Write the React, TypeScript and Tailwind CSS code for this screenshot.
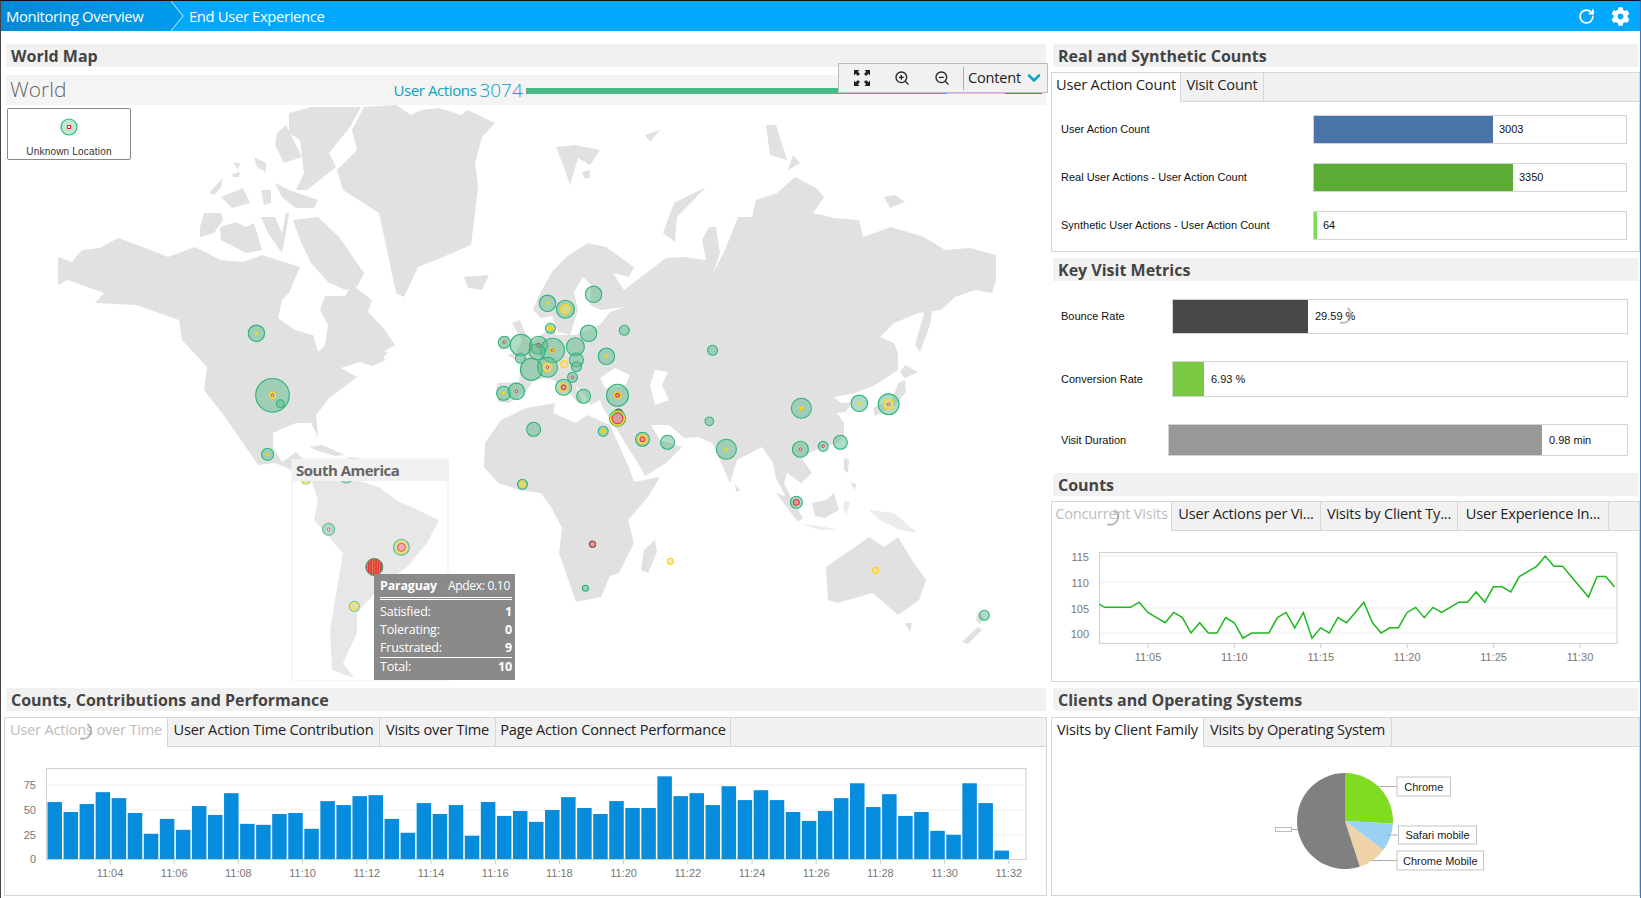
import React from 'react'
import { ChevronDown, RotateCw, ZoomIn, ZoomOut } from 'lucide-react'
import { FaCog } from 'react-icons/fa'

type Tab = { label: string; width: string; faded?: boolean }

const Header = ({ title }: { title: string }) => (
  <div className="h-[23px] bg-[#f1f1f1] pl-[5px] flex items-center text-[16px] font-bold text-[#444]">
    {title}
  </div>
)

const Tabs = ({ tabs }: { tabs: Tab[] }) => (
  <div className="h-[29px] bg-[#f1f1f1] border-b border-[#d6d6d6] flex text-[14.6px] tracking-[-0.2px] text-[#222]">
    {tabs.map((t, i) => (
      <div
        key={t.label}
        className={`${t.width} h-[29px] pb-[5px] border-r border-[#d6d6d6] flex items-center justify-center whitespace-nowrap ${i === 0 ? 'bg-white' : ''} ${t.faded ? 'text-[#bdbdbd]' : ''}`}
      >
        {t.label}
      </div>
    ))}
  </div>
)

const Spinner = ({ className }: { className: string }) => (
  <svg viewBox="0 0 20 20" className={`absolute w-[20px] h-[20px] ${className}`}>
    <path d="M12 2.5A8 8 0 0 1 5 16.5" fill="none" stroke="#999" strokeWidth="2" strokeOpacity="0.7" strokeLinecap="round" />
  </svg>
)

const CountBar = ({ label, value, fill }: { label: string; value: string; fill: string }) => (
  <div className="flex items-center h-[29px] mb-[19px]">
    <div className="w-[261px] pl-[9px] text-[#111]">{label}</div>
    <div className="w-[314px] h-[29px] border-[1.5px] border-[#d4d4d4] flex items-center">
      <div className={`${fill} h-full`} />
      <span className="ml-[6px] text-[#111]">{value}</span>
    </div>
  </div>
)

// land outlines, in page pixels
const land: [string, string?][] = [
  // north america
  ['58,257 72,262 82,250 100,248 118,238 140,246 168,257 195,247 221,260 243,262 262,255 300,267 289,293 282,300 278,318 295,330 313,335 318,352 325,345 328,325 320,310 325,296 345,296 352,285 372,300 368,312 385,330 395,345 378,355 386,360 372,366 360,362 341,368 357,377 340,390 330,397 316,415 318,437 311,423 296,423 273,433 273,447 282,462 296,452 302,460 320,478 312,480 296,472 275,463 258,465 243,443 225,417 204,390 207,367 182,340 179,320 136,305 95,303 104,293 68,280 58,285'],
  // greenland and arctic islands
  ['364,107 396,105 411,115 421,110 439,108 461,115 468,110 495,123 482,137 475,163 478,185 475,213 471,245 443,257 418,267 404,297 396,293 387,250 379,213 343,190 337,170 357,150 352,130'],
  ['289,113 311,107 361,107 350,127 329,153 336,167 307,190 296,190 304,173 300,140 289,133'],
  ['277,133 286,125 302,157 284,163 275,145'],
  ['204,213 221,213 223,220 214,233 200,237 200,227'],
  ['220,227 236,222 246,227 254,223 262,250 246,253 221,240'],
  ['221,197 243,188 250,203 232,208'],
  ['209,193 223,178 221,187 214,195'],
  ['254,157 266,163 266,172 257,167'],
  ['233,162 240,163 238,170'],
  ['232,174 240,172 239,177 233,177'],
  ['261,190 271,190 271,203 264,205'],
  ['275,183 289,190 318,200 314,208 296,208 282,197'],
  ['261,217 275,217 282,233 286,213 289,213 286,233 282,253 268,233'],
  ['293,220 318,217 339,237 364,273 357,287 346,290 329,283 311,263 300,240'],
  ['464,277 489,275 482,290 468,288'],
  ['375,350 388,352 380,362 372,358'],
  ['310,447 322,445 345,455 335,456 315,450'],
  ['348,457 360,458 358,462 348,461'],
  // south america
  ['296,452 321,478 346,477 379,487 396,500 439,520 427,543 407,567 380,587 357,613 357,633 343,663 354,678 332,670 330,630 343,553 314,520 318,500 312,482'],
  // eurasia
  ['496,388 498,383 519,382 521,363 507,355 519,352 534,340 548,330 550,322 556,335 575,335 600,325 610,312 625,307 601,310 590,305 591,285 583,277 574,292 578,310 570,335 558,332 552,316 541,318 533,310 538,297 552,272 566,257 588,243 606,247 634,267 629,277 613,273 624,290 641,277 666,258 684,257 706,260 702,240 709,227 716,227 720,253 713,273 725,250 738,217 752,217 756,200 777,193 795,177 816,188 824,197 813,213 834,218 859,220 863,237 891,227 924,237 945,250 970,248 996,255 996,280 992,293 975,290 955,297 941,310 919,313 894,323 880,337 894,343 898,353 898,370 875,385 855,393 834,397 841,403 852,402 846,412 837,413 844,423 844,437 837,443 816,450 801,457 812,473 801,483 787,473 784,483 791,497 801,515 790,505 776,478 773,463 762,447 737,460 730,483 723,467 712,443 698,437 684,438 669,425 651,425 660,440 682,447 666,463 645,476 642,470 616,428 603,408 600,400 591,405 585,395 575,385 584,403 577,402 563,385 548,378 534,380 525,393 509,403 498,402'],
  ['512,323 520,320 530,345 535,352 516,352 522,340'],
  ['500,338 509,336 508,348 500,350'],
  // africa
  ['501,420 526,408 555,403 553,413 576,423 587,415 610,425 630,470 634,482 660,477 648,497 628,520 634,543 619,573 610,576 601,597 576,602 559,553 562,528 551,507 541,493 519,490 498,483 484,467 485,443'],
  ['655,540 657,552 648,573 641,570 644,550'],
  // australasia
  ['826,567 855,547 869,537 884,547 898,537 912,560 926,580 919,600 898,615 873,593 837,603 828,600'],
  ['905,623 912,623 910,632'],
  ['962,642 978,627 982,630 968,644'],
  ['978,612 984,618 980,624 976,620'],
  ['812,503 826,500 834,493 839,510 825,518 815,516'],
  ['776,493 790,498 803,518 798,522'],
  // arctic russia and svalbard
  ['706,187 674,203 663,233 675,242 677,217'],
  ['556,147 575,145 600,150 590,165 578,158 570,185 565,170'],
  ['582,172 590,170 590,178 584,178'],
  ['645,135 660,130 650,142'],
  ['766,125 776,125 787,160 770,155'],
  ['793,155 800,163 788,170'],
  ['884,197 895,195 905,202 890,208'],
  // japan and around
  ['905,380 906,392 895,405 875,416 873,408 893,398 898,383'],
  ['905,365 918,372 905,378 900,372'],
  ['925,310 933,305 930,325 920,352 915,345'],
  ['735,484 740,490 736,492'],
  ['844,458 849,460 848,473 844,470'],
  ['850,482 856,484 855,490'],
  // lighter islands
  ['801,524 820,526 838,530 820,530', '#ececec'],
  ['845,500 850,503 846,515 843,508', '#ececec'],
  ['869,510 894,513 917,533 900,530 880,520', '#ececec'],
]

// [x, y, r, yellow r, red r] as read from the map crops
const bubbles: number[][] = [
  [593.6, 294.3, 8.2, 0, 0], [547.5, 303.3, 8.2, 1.5, 0], [565.4, 309.3, 9, 5, 0], [550.4, 328.3, 5, 2.5, 0],
  [588.6, 333.3, 8.2, 0, 0], [624.3, 330.3, 5, 0, 0], [504.3, 342.3, 6, 0, 1.2], [521, 345, 10.8, 0, 0],
  [538.6, 345.3, 9, 0, 2], [552.5, 350.3, 12, 2.5, 1.2], [537, 351.7, 8, 0, 0], [575.4, 346.7, 9, 0, 0],
  [520.4, 358.3, 5, 0, 0], [606.4, 356.3, 8.2, 1.5, 0], [576.4, 360, 7, 0, 0], [576.4, 366.7, 5, 0, 0],
  [564.3, 364.3, 3.5, 3.5, 0], [531.4, 369.3, 11, 0, 0], [547.5, 367.3, 10, 4.5, 1.2], [572.5, 377.3, 5, 0, 1.2],
  [563.6, 387.3, 8, 4.5, 2.5], [503.6, 393.3, 7, 1.5, 0], [516.4, 391.3, 8.2, 0, 1.2], [583.6, 396.3, 7, 0, 0],
  [617.5, 395.3, 11, 3, 2], [618.5, 413, 4, 0, 4], [617.5, 418.3, 8, 7, 5.5], [603.2, 431.3, 5, 2.2, 0], [533.6, 429.3, 7, 0, 0],
  [642.5, 439.3, 7, 4.5, 2.5], [667.5, 442.3, 7, 0, 0], [712.5, 350.3, 5, 0, 0], [709.3, 421.3, 4.3, 0, 0],
  [726.4, 449.3, 10, 1.5, 0], [801.4, 408.3, 10, 2, 0], [800.4, 449.3, 8, 0, 1.2], [823.2, 446.3, 5, 0, 1.2],
  [840.4, 442.3, 7, 0, 0], [859.3, 403.3, 8.2, 1.5, 0], [888.6, 404.3, 10.4, 5, 1.2], [796.4, 502.3, 6, 0, 3],
  [522.5, 484.3, 5, 3, 0], [592.5, 544.3, 3.2, 0, 3], [670.4, 561.3, 3.2, 3, 0], [585.4, 588.3, 3, 0, 0],
  [875.4, 570.3, 3.2, 3, 0], [984.3, 615.3, 5, 0, 0],
  [256.4, 333.3, 8.2, 1.5, 0], [272.5, 395.3, 16.8, 3, 1.2], [280.4, 403.7, 4, 0, 0], [267.5, 454.3, 6, 1.5, 0],
  [306, 479, 5, 4.5, 0], [346.4, 476, 7, 0, 0], [328.6, 529.3, 6, 0, 1.2], [401.4, 547.3, 8, 6, 4], [354.3, 606.3, 5, 4, 0],
]

const Land = () => (
  <g>
    {land.map(([pts, fill], i) => (
      <polygon key={i} points={pts} fill={fill ?? '#e1e1e1'} />
    ))}
    <polygon points="600,378 615,368 630,375 625,386 605,388" fill="#fff" />
    <polygon points="655,370 668,372 662,385 669,400 655,405 650,385" fill="#fff" />
  </g>
)

const Bubbles = () => (
  <g>
    {bubbles.map(([x, y, r, yr, rr], i) => (
      <g key={i}>
        {r > yr + 0.2 && <circle cx={x} cy={y} r={r} fill="#5fb98b" fillOpacity="0.5" stroke="#2bb57b" strokeWidth="1.1" />}
        {yr > 0 && (
          <circle cx={x} cy={y} r={yr} fill={yr > 2.5 ? '#f8e27a' : '#ffd500'} fillOpacity={yr > 2.5 ? 0.6 : 1} stroke="#ffd21f" strokeWidth={yr > 2.5 ? 1.2 : 0} />
        )}
        {rr > 0 && (
          <circle cx={x} cy={y} r={rr} fill={rr > 1.5 ? '#dd9a9a' : '#fff'} stroke="#e0202c" strokeWidth="1" />
        )}
      </g>
    ))}
  </g>
)

const WorldMap = () => (
  <svg viewBox="1 75 1047 606" className="absolute left-0 top-[44px] w-[1047px] h-[606px]">
    <defs>
      <pattern id="stripes" width="2.4" height="4" patternUnits="userSpaceOnUse">
        <rect width="2.4" height="4" fill="#e23a32" />
        <rect width="0.7" height="4" fill="#f08a70" />
      </pattern>
    </defs>
    <Land />
    <Bubbles />
    <rect x="292" y="459" width="156" height="222" fill="#fff" fillOpacity="0.22" stroke="#eee" />
    <circle cx="374.3" cy="567" r="8.5" fill="url(#stripes)" stroke="#2a9a6c" strokeWidth="1" />
  </svg>
)

const tooltipRows = [
  ['Satisfied:', '1'],
  ['Tolerating:', '0'],
  ['Frustrated:', '9'],
]

const Tooltip = () => (
  <div className="absolute left-[373px] top-[543px] w-[141px] h-[106px] bg-[#8a8a8a] text-white text-[12.5px] tracking-[-0.2px] pl-[6px] pr-[3px] pt-[3px]">
    <div className="flex justify-between items-center h-[18px] pr-[2px] border-b-[3px] border-double border-white box-content pb-[2px]">
      <span className="font-bold">Paraguay</span>
      <span className="text-[12px] tracking-[-0.3px]">Apdex: 0.10</span>
    </div>
    <div className="mt-[3px]">
      {tooltipRows.map(([k, v]) => (
        <div key={k} className="flex justify-between h-[18px] items-center">
          <span>{k}</span>
          <span className="font-bold">{v}</span>
        </div>
      ))}
    </div>
    <div className="flex justify-between h-[19px] items-center border-t border-white">
      <span>Total:</span>
      <span className="font-bold">10</span>
    </div>
  </div>
)

const ExpandIcon = () => (
  <svg viewBox="0 0 16 16" className="w-[16px] h-[16px] text-[#222]" fill="currentColor">
    <path d="M0 0h5.5L3.8 1.7 6 3.9 3.9 6 1.7 3.8 0 5.5zM16 0v5.5l-1.7-1.7L12.1 6 10 3.9l2.2-2.2L10.500 0zM0 16v-5.5l1.700 1.700L3.900 10 6 12.100l-2.200 2.200L5.500 16zM16 16h-5.500l1.700-1.700L10 12.100 12.100 10l2.200 2.200 1.700-1.700z" />
  </svg>
)

const Toolbar = () => (
  <div className="absolute left-[837px] top-[32px] w-[210px] h-[30px] bg-[#f1f1f1] border border-[#bdbdbd] flex items-center text-[#222]">
    <div className="w-[124px] flex items-center pl-[15px] gap-[24px]">
      <ExpandIcon />
      <ZoomIn size={16} strokeWidth={2} />
      <ZoomOut size={16} strokeWidth={2} />
    </div>
    <div className="h-[23px] border-l border-[#aaa] pl-[4px] flex items-center text-[14.6px] tracking-[-0.2px]">
      Content
      <ChevronDown size={20} strokeWidth={3} className="ml-[3px] text-[#0aa5c4]" />
    </div>
  </div>
)

const MapSection = () => (
  <section className="relative -ml-[5px] -mr-[2px] h-[649px]">
    <WorldMap />
    <div className="pt-[13px] pl-[5px] pr-[2px]">
      <div className="relative">
        <Header title="World Map" />
      </div>
      <div className="relative mt-[8px] h-[30px] bg-[#f3f3f3]/90 flex items-center">
        <span className="pl-[4px] text-[21px] font-light text-[#666]">World</span>
        <span className="ml-[327px] text-[15px] tracking-[-0.4px] text-[#109fc0]">User Actions</span>
        <span className="ml-[3px] text-[19px] font-light text-[#109fc0]">3074</span>
        <div className="absolute right-[4px] top-[13px] w-[516px] h-[6px] flex">
          <div className="w-[421px] bg-[#4cba86]" />
          <div className="w-[58px] bg-[#f3d24a]" />
          <div className="w-[37px] bg-[#df4b4b]" />
        </div>
      </div>
    </div>
    <div className="absolute left-[6px] top-[77px] w-[124px] h-[52px] border border-[#8a8a8a] rounded-[2px] bg-white flex flex-col items-center pt-[9px]">
      <svg viewBox="0 0 18 18" className="w-[18px] h-[18px]">
        <circle cx="9" cy="9" r="8" fill="#c3e7d3" stroke="#2bb57b" strokeWidth="1.2" />
        <rect x="7.500" y="7.500" width="3" height="3" fill="#fff" stroke="#e0202c" />
      </svg>
      <div className="mt-[8px] font-['Liberation_Sans',Arial,sans-serif] text-[10px] text-[#333] tracking-[0.2px]">Unknown Location</div>
    </div>
    <div className="absolute left-[291px] top-[428px] w-[157px] h-[22px] bg-[#f1f1f1] pl-[4px] flex items-center text-[15px] font-bold tracking-[-0.5px] text-[#666]">
      South America
    </div>
    <Tooltip />
    <Toolbar />
  </section>
)

const barData = [58, 48, 56, 68, 62, 47, 26, 41, 30, 54, 45, 67, 36, 35, 46, 47, 31, 59, 55, 64, 65, 41, 27, 57, 46, 55, 24, 58, 44, 49, 38, 50, 63, 52, 46, 59, 52, 52, 84, 64, 67, 55, 74, 60, 70, 60, 48, 39, 49, 62, 77, 53, 66, 44, 48, 29, 25, 77, 57, 9]
const barTimes = ['11:04', '11:06', '11:08', '11:10', '11:12', '11:14', '11:16', '11:18', '11:20', '11:22', '11:24', '11:26', '11:28', '11:30', '11:32']

const axisText = "font-['Liberation_Sans',Arial,sans-serif] text-[11px] fill-[#777]"

const BarChart = () => (
  <svg viewBox="5 747 1041 148" className="w-[1041px] h-[148px]">
    {[[75, 785], [50, 810], [25, 835]].map(([v, y]) => (
      <g key={v}>
        <line x1="46.500" x2="1026" y1={y} y2={y} stroke="#eee" />
        <text x="36" y={y + 4} textAnchor="end" className={axisText}>{v}</text>
      </g>
    ))}
    <text x="36" y="863" textAnchor="end" className={axisText}>0</text>
    {barData.map((v, i) => (
      <rect key={i} x={47.5 + i * 16.05} y={859.5 - v * 0.99} width="14.500" height={v * 0.99} fill="#058cdd" />
    ))}
    <rect x="46.500" y="768.500" width="979.500" height="91" fill="none" stroke="#d0d0d0" />
    {barTimes.map((t, i) => (
      <g key={t}>
        <line x1={110 + i * 64.2} x2={110 + i * 64.2} y1="860" y2="864" stroke="#ccc" />
        <text x={110 + i * 64.2} y="877" textAnchor="middle" className={axisText}>{t}</text>
      </g>
    ))}
  </svg>
)

const lineData = [105.6, 105, 105, 105, 105, 106, 104, 103, 102, 104, 103, 100, 102, 100, 100, 103, 102, 99, 100, 100, 100, 103, 104, 101, 104, 99, 101, 100, 103, 102, 104, 106, 102, 100, 101, 101, 104, 105, 103, 105, 104, 105, 106, 106, 108, 106, 109, 109, 108, 111, 112, 113, 115, 113, 113, 111, 109, 107, 111, 111, 109]
const lineTimes = ['11:05', '11:10', '11:15', '11:20', '11:25', '11:30']

const LineChart = () => {
  const pts = lineData
    .map((v, i) => `${i === 0 ? 1099.4 : 1096 + i * 8.64},${634 - (v - 100) * 5.13}`)
    .join(' ')
  return (
    <svg viewBox="1052 532 586 149" className="w-[586px] h-[149px]">
      {[[115, 557], [110, 583], [105, 609], [100, 634]].map(([v, y]) => (
        <g key={v}>
          <line x1="1099.500" x2="1617" y1={y} y2={y} stroke="#eee" />
          <text x="1089" y={y + 5} textAnchor="end" className={axisText}>{v}</text>
        </g>
      ))}
      <rect x="1099.500" y="553.500" width="517.500" height="91" fill="none" stroke="#d0d0d0" />
      <polyline points={pts} fill="none" stroke="#1cb81c" strokeWidth="1.500" />
      {lineTimes.map((t, i) => (
        <g key={t}>
          <line x1={1148 + i * 86.4} x2={1148 + i * 86.4} y1="645" y2="649" stroke="#ccc" />
          <text x={1148 + i * 86.4} y="662" textAnchor="middle" className={axisText}>{t}</text>
        </g>
      ))}
    </svg>
  )
}

const slice = (a0: number, a1: number) => {
  const cx = 1345
  const cy = 821
  const r = 48
  const pt = (a: number) => {
    const t = ((a - 90) * Math.PI) / 180
    return `${cx + r * Math.cos(t)} ${cy + r * Math.sin(t)}`
  }
  return `M${cx} ${cy}L${pt(a0)}A${r} ${r} 0 ${a1 - a0 > 180 ? 1 : 0} 1 ${pt(a1)}Z`
}

const pieLabels = [
  { text: 'Chrome', x: 1397, y: 777, w: 53.5, h: 19, lx: 1377, ly: 786.5 },
  { text: 'Safari mobile', x: 1398.5, y: 826, w: 78, h: 18, lx: 1387, ly: 835 },
  { text: 'Chrome Mobile', x: 1397, y: 851, w: 86.5, h: 19, lx: 1371.5, ly: 860.5 },
]

const PieChart = () => (
  <svg viewBox="1052 747 586 148" className="w-[586px] h-[148px]">
    <path d={slice(0, 93)} fill="#7fdc20" />
    <path d={slice(93, 127)} fill="#9ad0f2" />
    <path d={slice(127, 162)} fill="#f0d2a8" />
    <path d={slice(162, 360)} fill="#808080" />
    {pieLabels.map((l) => (
      <g key={l.text}>
        <line x1={l.lx} x2={l.x} y1={l.ly} y2={l.ly} stroke="#aaa" />
        <rect x={l.x} y={l.y} width={l.w} height={l.h} fill="#fff" stroke="#c4c4c4" />
        <text x={l.x + l.w / 2} y={l.y + l.h / 2 + 4} textAnchor="middle" className="font-['Liberation_Sans',Arial,sans-serif] text-[11px] fill-[#222]">
          {l.text}
        </text>
      </g>
    ))}
    <line x1="1291" x2="1298" y1="829.500" y2="829.500" stroke="#aaa" />
    <rect x="1275.500" y="827.500" width="16" height="4" fill="#fff" stroke="#bbb" />
  </svg>
)

const App = () => {
  return (
    <div className="relative w-[1641px] h-[898px] overflow-hidden bg-white border-t border-l border-r border-t-[#111] border-l-[#444] border-r-[#3a7ab8] font-['Open_Sans',sans-serif]">
      <div className="h-[30px] bg-[#00a8ff] flex items-center text-white text-[14.8px] tracking-[-0.35px]">
        <div className="w-[170px] h-full pl-[5px] flex items-center bg-gradient-to-r from-[#0089d6] to-[#009aeb] whitespace-nowrap">
          Monitoring Overview
        </div>
        <svg viewBox="0 0 13 30" className="w-[13px] h-[30px]">
          <path d="M0 0L12 15L0 30Z" fill="#009aeb" />
          <path d="M0 0L12 15L0 30" fill="none" stroke="#d5efff" strokeWidth="1" />
        </svg>
        <span className="ml-[5px]">End User Experience</span>
        <div className="ml-auto flex items-center pr-[10px] gap-[16px]">
          <RotateCw size={17} strokeWidth={2.5} />
          <FaCog size={19} />
        </div>
      </div>

      <div className="flex">
        <div className="w-[1047px] pl-[5px] pr-[2px] relative">
          <MapSection />
          <div className="mt-[8px]">
            <Header title="Counts, Contributions and Performance" />
          </div>
          <div className="relative mt-[6px] -ml-[2px] -mr-[1px] h-[179px] border border-[#d6d6d6]">
            <Tabs
              tabs={[
                { label: 'User Actions over Time', width: 'w-[163px]', faded: true },
                { label: 'User Action Time Contribution', width: 'w-[212px]' },
                { label: 'Visits over Time', width: 'w-[116px]' },
                { label: 'Page Action Connect Performance', width: 'w-[235px]' },
              ]}
            />
            <BarChart />
            <Spinner className="left-[71px] top-[4px]" />
          </div>
        </div>

        <div className="w-[592px] pl-[5px] pr-[2px] pt-[13px]">
          <Header title="Real and Synthetic Counts" />
          <div className="mt-[5px] -mx-[2px] h-[180px] border border-[#d6d6d6]">
            <Tabs
              tabs={[
                { label: 'User Action Count', width: 'w-[129px]' },
                { label: 'Visit Count', width: 'w-[83px]' },
              ]}
            />
            <div className="pt-[13px] font-['Liberation_Sans',Arial,sans-serif] text-[11px]">
              <CountBar label="User Action Count" value="3003" fill="w-[179px] bg-[#4a74a8]" />
              <CountBar label="Real User Actions - User Action Count" value="3350" fill="w-[199px] bg-[#5dac35]" />
              <CountBar label="Synthetic User Actions - User Action Count" value="64" fill="w-[3px] bg-[#7edb5a]" />
            </div>
          </div>

          <div className="mt-[6px]">
            <Header title="Key Visit Metrics" />
          </div>
          <div className="relative h-[192px] font-['Liberation_Sans',Arial,sans-serif] text-[11px] text-[#111] pl-[8px] pt-[18px]">
            <div className="flex items-center h-[35px]">
              <div className="w-[111px]">Bounce Rate</div>
              <div className="w-[456px] h-[35px] border-[1.5px] border-[#d4d4d4] flex items-center">
                <div className="w-[135px] h-full bg-[#48484a]" />
                <span className="ml-[7px]">29.59 %</span>
              </div>
            </div>
            <div className="flex items-center h-[36px] mt-[27px]">
              <div className="w-[111px]">Conversion Rate</div>
              <div className="w-[456px] h-[36px] border-[1.5px] border-[#d4d4d4] flex items-center">
                <div className="w-[31px] h-full bg-[#7ac943]" />
                <span className="ml-[7px]">6.93 %</span>
              </div>
            </div>
            <div className="flex items-center h-[32px] mt-[27px]">
              <div className="w-[107px]">Visit Duration</div>
              <div className="w-[460px] h-[32px] border-[1.5px] border-[#d4d4d4] flex items-center">
                <div className="w-[373px] h-full bg-[#999]" />
                <span className="ml-[7px]">0.98 min</span>
              </div>
            </div>
            <Spinner className="left-[283px] top-[25px]" />
            <Spinner className="left-[283px] top-[149px] opacity-30" />
          </div>

          <Header title="Counts" />
          <div className="relative mt-[5px] -mx-[2px] h-[181px] border border-[#d6d6d6]">
            <Tabs
              tabs={[
                { label: 'Concurrent Visits', width: 'w-[120px]', faded: true },
                { label: 'User Actions per Vi...', width: 'w-[149px]' },
                { label: 'Visits by Client Ty...', width: 'w-[137px]' },
                { label: 'User Experience In...', width: 'w-[151px]' },
              ]}
            />
            <LineChart />
            <Spinner className="left-[51px] top-[6px]" />
          </div>

          <div className="mt-[6px]">
            <Header title="Clients and Operating Systems" />
          </div>
          <div className="mt-[6px] -mx-[2px] h-[179px] border border-[#d6d6d6]">
            <Tabs
              tabs={[
                { label: 'Visits by Client Family', width: 'w-[152px]' },
                { label: 'Visits by Operating System', width: 'w-[188px]' },
              ]}
            />
            <PieChart />
          </div>
        </div>
      </div>
    </div>
  )
}

export default App
